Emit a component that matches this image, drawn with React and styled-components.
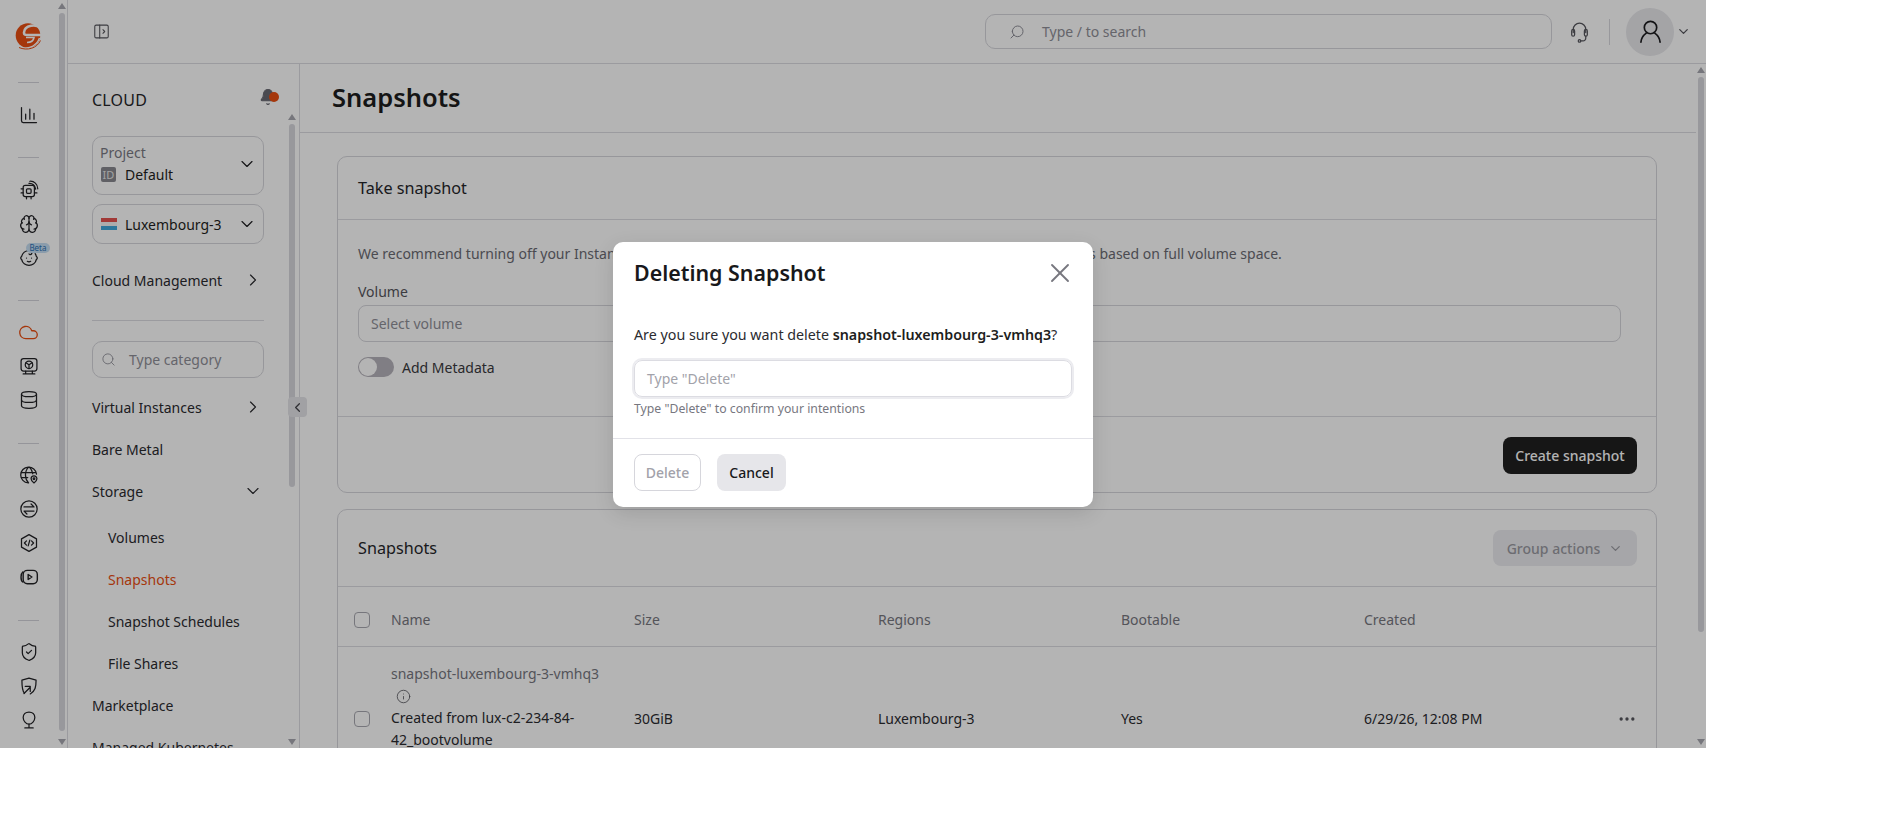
import React from 'react';
import styled, { createGlobalStyle } from 'styled-components';
import { ChevronDown, ChevronRight, ChevronLeft, Search, X, Brain, Baby, Cloud, Database, ShieldCheck, Info, Ellipsis, Bell } from 'lucide-react';

const Global = createGlobalStyle`
  html, body { margin: 0; padding: 0; background: #fff; }
  body { font-family: "Noto Sans", "Open Sans", sans-serif; font-size: 14px; color: #1f1f22; }
  * { box-sizing: border-box; }
`;

const Page = styled.div`
  position: relative; width: 1706px; height: 748px; overflow: hidden; display: flex; background: #fff;
`;
const Rail = styled.aside`
  width: 68px; flex: none; display: flex; border-right: 1px solid #dcdce2;
`;
const RailIcons = styled.nav`
  width: 57px; flex: none; display: flex; flex-direction: column; align-items: center; padding-top: 18px; color: #2a2a2e;
`;
const RailDivider = styled.hr`
  width: 21px; height: 1px; border: 0; background: #d4d4da; margin: ${p => p.$t}px 0 ${p => p.$b}px;
  flex: none;
`;
const RailIcon = styled.span`
  position: relative; height: 34px; width: 34px; flex: none; display: flex; align-items: center; justify-content: center;
  color: ${p => p.$active ? '#ea4e12' : '#222226'};
`;
const BetaBadge = styled.span`
  position: absolute; top: 2px; right: -4px; height: 10px; padding: 0 3px; border-radius: 5px;
  background: #c6def2; color: #2c70b4; font-size: 8px; line-height: 10px;
`;
const Scroll = styled.div`
  display: flex; flex-direction: column; align-items: center; width: ${p => p.$w || 9}px; flex: none;
  height: 100%; padding: ${p => p.$top || 3}px 0 3px;
`;
const ArrowUp = styled.i`
  width: 0; height: 0; flex: none; border: 4px solid transparent; border-top: 0; border-bottom: 6px solid #a8a8b0;
`;
const ArrowDown = styled.i`
  width: 0; height: 0; flex: none; border: 4px solid transparent; border-bottom: 0; border-top: 6px solid #a8a8b0; margin-top: auto;
`;
const Thumb = styled.b`
  display: block; width: 6px; height: ${p => p.$h}px; flex: none; margin-top: 4px; border-radius: 3px; background: #d8d8de;
`;
const Column = styled.div`
  flex: 1; min-width: 0; display: flex; flex-direction: column;
`;
const TopBar = styled.header`
  height: 64px; flex: none; display: flex; align-items: center; padding: 0 15px 0 25px; border-bottom: 1px solid #dcdce2;
`;
const IconButton = styled.span`
  display: flex; align-items: center; color: #55555c;
`;
const SearchBar = styled.div`
  margin-left: auto; width: 567px; height: 35px; margin-right: 15px; display: flex; align-items: center; gap: 17px; padding-left: 23px;
  border: 1px solid #d6d6dc; border-radius: 10px; color: #8f8f98; font-size: 14px;
`;
const VLine = styled.span`
  width: 1px; height: 26px; background: #d8d8de; margin: 0 16px 0 17px;
`;
const Avatar = styled.span`
  width: 48px; height: 48px; border-radius: 50%; background: #e8e8ec; display: flex; align-items: center; justify-content: center; color: #1d1d20;
`;
const Body = styled.div`
  flex: 1; min-height: 0; display: flex;
`;
const SideBar = styled.aside`
  position: relative; width: 232px; flex: none; display: flex; border-right: 1px solid #dcdce2;
`;
const SideInner = styled.div`
  width: 219px; flex: none; padding: 0 0 0 24px; overflow: hidden;
`;
const SideHead = styled.div`
  height: 72px; width: 187px; display: flex; align-items: center; justify-content: space-between; font-size: 16px; letter-spacing: .2px; color: #26262a;
`;
const BellWrap = styled.span`
  position: relative; display: flex; width: 20px; color: #6a6a72; margin-top: -6px;
`;
const BellDot = styled.span`
  position: absolute; right: 0; top: 4px; width: 10px; height: 10px; border-radius: 50%; background: #ea4e12;
`;
const SelectBox = styled.div`
  width: 172px; height: ${p => p.$h}px; margin-bottom: 9px; padding: 0 6px ${p => p.$pb || 0}px ${p => p.$pl || 7}px; display: flex; align-items: center; justify-content: space-between;
  border: 1px solid #d6d6dc; border-radius: 10px;
`;
const SelectStack = styled.div`
  display: flex; flex-direction: column;
`;
const SelectLabel = styled.span`
  color: #7a7a84; font-size: 14px; line-height: 21px;
`;
const SelectValue = styled.span`
  display: flex; align-items: center; gap: 8px; font-size: 14px; line-height: 23px; color: #1f1f22;
`;
const IdChip = styled.span`
  width: 15px; height: 15px; margin: 0 1px 0 1px; background: #88888f; color: #e6e6e6; border-radius: 2px; font-size: 11px; line-height: 15px; text-align: center;
`;
const Flag = styled.span`
  width: 16px; height: 12px; display: block; flex: none; margin-left: 1px;
  background: linear-gradient(#e4524f 0 33%, #f4f4f4 33% 66%, #41a9dc 66%);
`;
const NavRow = styled.div`
  width: 171px; height: 42px; flex: none; display: flex; align-items: center; justify-content: space-between;
  padding-left: ${p => p.$sub ? 16 : 0}px; color: ${p => p.$active ? '#ea4e12' : '#2b2b30'}; font-size: 14px; white-space: nowrap;
`;
const ManagementRow = styled(NavRow)`
  margin-top: 19px; height: 34px;
`;
const SideDivider = styled.hr`
  width: 172px; height: 1px; margin: 23px 0 20px; border: 0; background: #dcdce2;
`;
const SearchSide = styled.div`
  width: 172px; height: 37px; display: flex; align-items: center; gap: 13px; padding-left: 8px; margin-bottom: 8px;
  border: 1px solid #d6d6dc; border-radius: 10px; color: #8f8f98;
`;
const SubList = styled.div`
  padding-top: 4px;
`;
const Collapse = styled.span`
  position: absolute; left: 220px; top: 333px; width: 19px; height: 20px; border-radius: 4px; background: #e4e4e8;
  display: flex; align-items: center; justify-content: center; color: #44444a;
`;
const Content = styled.main`
  flex: 1; min-width: 0; display: flex;
`;
const ContentInner = styled.div`
  width: 1396px; flex: none;
`;
const PageHead = styled.div`
  height: 69px; padding: 0 0 3px 32px; display: flex; align-items: center; border-bottom: 1px solid #dcdce2;
`;
const H1 = styled.h1`
  margin: 0; font-size: 25.5px; font-weight: 600; color: #1d1d20;
`;
const Card = styled.section`
  width: 1320px; margin: ${p => p.$t}px 0 0 37px; border: 1px solid #d6d6dc; border-radius: ${p => p.$open ? '10px 10px 0 0' : '10px'};
`;
const CardHead = styled.div`
  height: ${p => p.$h}px; padding: 0 19px 0 20px; display: flex; align-items: center; justify-content: space-between; border-bottom: 1px solid #dcdce2;
  font-size: 16.2px; color: #26262a;
`;
const CardBody = styled.div`
  height: 197px; padding: 23px 20px 0; border-bottom: 1px solid #dcdce2;
`;
const Note = styled.p`
  margin: 0; line-height: 22px; color: #6b6b73; font-size: 14px;
`;
const FieldLabel = styled.div`
  margin-top: 16px; line-height: 22px; color: #55555c;
`;
const Field = styled.div`
  width: 1263px; height: 37px; margin-top: 2px; padding-left: 12px; display: flex; align-items: center; border: 1px solid #d6d6dc; border-radius: 8px; color: #8f8f98; font-size: 14px;
`;
const SwitchRow = styled.div`
  margin-top: 15px; display: flex; align-items: center; gap: 8px; color: #3a3a40;
`;
const Switch = styled.span`
  position: relative; width: 36px; height: 20px; border-radius: 10px; background: #b6b3bb;
  &::after { content: ''; position: absolute; left: 1px; top: 1px; width: 18px; height: 18px; border-radius: 50%; background: #fff; }
`;
const CardFoot = styled.div`
  height: 75px; padding: 0 19px; display: flex; align-items: center; justify-content: flex-end;
`;
const PrimaryBtn = styled.button`
  height: 37px; width: 134px; border: 0; border-radius: 8px; background: #202020; color: #fff; font: 500 14px "Noto Sans", sans-serif; margin-top: 1px;
`;
const GroupBtn = styled.button`
  height: 36px; width: 144px; border: 0; border-radius: 8px; background: #ececf0; color: #9a9aa2; display: flex; align-items: center; justify-content: center; gap: 8px;
  font: 500 14px "Noto Sans", sans-serif;
`;
const TableRow = styled.div`
  display: grid; grid-template-columns: 37px 243px 244px 243px 243px 1fr 40px; align-items: center;
  padding-left: 16px; height: ${p => p.$h}px; padding-top: ${p => p.$head ? 7 : 0}px; border-bottom: ${p => p.$line ? '1px solid #dcdce2' : '0'};
  color: ${p => p.$head ? '#77777f' : '#2b2b30'}; line-height: 22px;
`;
const Check = styled.span`
  width: 16px; height: 16px; display: block; border: 1px solid #a8a8b0; border-radius: 4px; background: #fff;
`;
const NameCell = styled.div`
  width: 218px; padding-bottom: 24px;
`;
const SnapName = styled.span`
  color: #77777f;
`;
const InfoMark = styled.span`
  display: inline-flex; margin: 0 0 0 5px; vertical-align: -3px; color: #55555c;
`;
const More = styled.span`
  display: flex; color: #55555c; margin-left: 1px;
`;
const Overlay = styled.div`
  position: absolute; inset: 0; background: rgba(0,0,0,.295); display: flex; align-items: center; justify-content: center;
`;
const Modal = styled.div`
  width: 480px; height: 265px; background: #fff; border-radius: 10px; box-shadow: 0 6px 20px rgba(0,0,0,.12); display: flex; flex-direction: column;
`;
const ModalHead = styled.div`
  height: 62px; padding: 0 17px 0 21px; display: flex; align-items: center; justify-content: space-between;
`;
const ModalTitle = styled.h2`
  margin: 0; font-size: 21.4px; font-weight: 600; color: #18181b;
`;
const CloseBtn = styled.span`
  display: flex; color: #77777f;
`;
const ModalBody = styled.div`
  height: 135px; padding: 20px 21px 0; border-bottom: 1px solid #e2e2e8;
`;
const Confirm = styled.p`
  margin: 0; line-height: 22px; color: #2b2b30; font-size: 14.28px;
  strong { font-weight: 600; color: #1d1d20; }
`;
const ConfirmInput = styled.div`
  height: 37px; margin-top: 14px; padding-left: 12px; display: flex; align-items: center; border: 1px solid #dcdce2; border-radius: 8px; box-shadow: 0 0 0 2px #ececf0;
  color: #a2a2aa; font-size: 14px;
`;
const Hint = styled.div`
  margin-top: 3px; font-size: 12.25px; line-height: 18px; color: #77777f;
`;
const ModalFoot = styled.div`
  flex: 1; padding: 15px 21px; display: flex; gap: 16px; align-items: flex-start;
`;
const GhostBtn = styled.button`
  height: 37px; width: 67px; border-radius: 8px; border: 1px solid #d6d6dc; background: #fff; color: #a2a2aa; font: 500 14px "Noto Sans", sans-serif; padding: 0;
`;
const CancelBtn = styled.button`
  height: 37px; width: 69px; border-radius: 8px; border: 0; background: #e6e6ea; color: #18181b; font: 500 14px "Noto Sans", sans-serif; padding: 0;
`;

const Svg = ({ children, s = 20, sw = 1.5 }) => (
  <svg width={s} height={s} viewBox="0 0 24 24" fill="none" stroke="currentColor" strokeWidth={sw} strokeLinecap="round" strokeLinejoin="round">{children}</svg>
);
const Logo = () => (
  <svg width="27" height="29" viewBox="0 0 27 29">
    <circle cx="13" cy="14.500" r="12.300" fill="#ea4e12" />
    <path d="M27 7.500C21 2.500 9.500 4 9 11.500 8.900 13.500 10 14 12 14h15" fill="none" stroke="#fff" strokeWidth="2.600" />
    <path d="M11 16.500h8c-.5 3-3 5-7 5" fill="none" stroke="#fff" strokeWidth="1.600" />
    <path d="M2 25c7 4.500 19 2 22.500-8" fill="none" stroke="#fff" strokeWidth="1.400" />
    <path d="M4 26.500c8 3.500 18 1 21.500-7" fill="none" stroke="#ea4e12" strokeWidth="1" />
  </svg>
);
const Chip = () => (<Svg><rect x="5" y="6.500" width="13.500" height="13.500" rx="2.500"/><rect x="9" y="10.500" width="5.500" height="5.500" rx="1.200"/><path d="M2.500 10.500H5M2.500 15.500H5M9 20v2.500M14.500 20v2.500M18.500 15.500h3M12 4c4-.5 7.500 2.500 8 7M13 1.500c5-.5 9.500 3.500 9.500 9"/></Svg>);
const MonitorCube = () => (<Svg><rect x="2.500" y="3" width="19" height="15" rx="3"/><circle cx="12" cy="10.500" r="4.500"/><path d="M12 10.500V15M12 10.500 8.300 8M12 10.500 15.700 8M5 21.500h14M8 18v3.500M16 18v3.500"/></Svg>);
const GlobePin = () => (<Svg><path d="M21 11a9.500 9.500 0 1 0-10 10.500M2.500 9h18M2.500 15h8M11.500 2.500c-5 5-5 14 0 19M12.500 2.500c2.300 2.300 3.600 5 4 8"/><path d="M18 21.500s-3.500-2.500-3.500-5a3.500 3.500 0 0 1 7 0c0 2.500-3.500 5-3.500 5z"/><circle cx="18" cy="16.500" r="1"/></Svg>);
const SwapCircle = () => (<Svg><circle cx="12" cy="12" r="9.800"/><path d="M6 9.500h12M14.500 6l3.500 3.500M18 14.500H6M9.500 18 6 14.500"/></Svg>);
const HexCode = () => (<Svg><path d="M12 2 21 7v10l-9 5-9-5V7z"/><path d="m9 9.500-2.500 2.500L9 14.500M15 9.500l2.500 2.500-2.500 2.500M13 8.500l-2 7"/></Svg>);
const VideoFrame = () => (<Svg sw={1.700}><rect x="5" y="4" width="17" height="16" rx="5"/><path d="M4.500 6C2 8 1.500 16 4.500 18"/><path d="M11 9v6l4.500-3z"/></Svg>);
const ShieldArrow = () => (<Svg><path d="M6.500 20.500C4 18 3.500 14 3.500 5L12 2.500 20.500 5c0 8-1 13-7 16.500"/><path d="M6 21l7.500-7.500M7.500 12.500h6v6"/></Svg>);
const BulbPin = () => (<Svg><path d="M12 2.500c4 0 7 2.500 7 6.500s-3.500 8-7 8-7-4-7-8 3-6.500 7-6.500z"/><path d="M12 17v4.500M7 21.500h10"/></Svg>);
const PanelIcon = () => (<Svg s={17}><rect x="2.500" y="3" width="19" height="18" rx="2"/><path d="M9.500 3v18M14 9.500l2.500 2.500-2.500 2.500"/></Svg>);
const ChartIcon = () => (<Svg><path d="M3 3v16a2 2 0 0 0 2 2h16M8 17v-6M13 17V5M18 17v-7"/></Svg>);
const HeadsetIcon = () => (<Svg s={25} sw={1.200}><path d="M6 13V10a6 6 0 0 1 12 0v3"/><rect x="4.500" y="10" width="2.800" height="6.500" rx="1.400"/><rect x="16.700" y="10" width="2.800" height="6.500" rx="1.400"/><path d="M18 16.500v2a2.500 2.500 0 0 1-2.500 2.500H13"/><circle cx="12" cy="21" r="1.200"/></Svg>);
const UserIcon = () => (<Svg s={27} sw={1.500}><circle cx="12" cy="8.500" r="5.500"/><path d="M3.500 21.500c.3-3.500 2-6 4.700-8M20.500 21.500c-.3-3.500-2-6-4.700-8"/></Svg>);

export default function App() {
  return (
    <Page>
      <Global />
      <Rail>
        <RailIcons>
          <RailIcon><Logo /></RailIcon>
          <RailDivider $t={30} $b={15} />
          <RailIcon><ChartIcon /></RailIcon>
          <RailDivider $t={25} $b={15} />
          <RailIcon><Chip /></RailIcon>
          <RailIcon><Brain size={20} strokeWidth={1.5} /></RailIcon>
          <RailIcon><Baby size={20} strokeWidth={1.5} /><BetaBadge>Beta</BetaBadge></RailIcon>
          <RailDivider $t={25} $b={14} />
          <RailIcon $active><Cloud size={21} strokeWidth={1.5} /></RailIcon>
          <RailIcon><MonitorCube /></RailIcon>
          <RailIcon><Database size={20} strokeWidth={1.5} /></RailIcon>
          <RailDivider $t={26} $b={14} />
          <RailIcon><GlobePin /></RailIcon>
          <RailIcon><SwapCircle /></RailIcon>
          <RailIcon><HexCode /></RailIcon>
          <RailIcon><VideoFrame /></RailIcon>
          <RailDivider $t={26} $b={14} />
          <RailIcon><ShieldCheck size={20} strokeWidth={1.5} /></RailIcon>
          <RailIcon><ShieldArrow /></RailIcon>
          <RailIcon><BulbPin /></RailIcon>
        </RailIcons>
        <Scroll $w={10}><ArrowUp /><Thumb $h={718} /><ArrowDown /></Scroll>
      </Rail>
      <Column>
        <TopBar>
          <IconButton><PanelIcon /></IconButton>
          <SearchBar><Search size={16} strokeWidth={1.5} style={{ transform: 'scaleX(-1)' }} />Type / to search</SearchBar>
          <IconButton><HeadsetIcon /></IconButton>
          <VLine />
          <Avatar><UserIcon /></Avatar>
          <IconButton><ChevronDown size={15} style={{ marginLeft: 2 }} /></IconButton>
        </TopBar>
        <Body>
          <SideBar>
            <SideInner>
              <SideHead>CLOUD<BellWrap><Bell size={18} fill="currentColor" strokeWidth={1.5} /><BellDot /></BellWrap></SideHead>
              <SelectBox $h={59} $pb={4}>
                <SelectStack>
                  <SelectLabel>Project</SelectLabel>
                  <SelectValue><IdChip>ID</IdChip>Default</SelectValue>
                </SelectStack>
                <ChevronDown size={20} strokeWidth={1.4} />
              </SelectBox>
              <SelectBox $h={40}>
                <SelectValue><Flag />Luxembourg-3</SelectValue>
                <ChevronDown size={20} strokeWidth={1.4} />
              </SelectBox>
              <ManagementRow>Cloud Management<ChevronRight size={20} strokeWidth={1.4} /></ManagementRow>
              <SideDivider />
              <SearchSide><Search size={15} strokeWidth={1.4} />Type category</SearchSide>
              <NavRow>Virtual Instances<ChevronRight size={20} strokeWidth={1.4} /></NavRow>
              <NavRow>Bare Metal</NavRow>
              <NavRow>Storage<ChevronDown size={20} strokeWidth={1.4} /></NavRow>
              <SubList>
                <NavRow $sub>Volumes</NavRow>
                <NavRow $sub $active>Snapshots</NavRow>
                <NavRow $sub>Snapshot Schedules</NavRow>
                <NavRow $sub>File Shares</NavRow>
              </SubList>
              <NavRow>Marketplace</NavRow>
              <NavRow>Managed Kubernetes</NavRow>
            </SideInner>
            <Scroll $w={9} $top={50}><ArrowUp /><Thumb $h={363} /><ArrowDown /></Scroll>
            <Collapse><ChevronLeft size={15} /></Collapse>
          </SideBar>
          <Content>
            <ContentInner>
              <PageHead><H1>Snapshots</H1></PageHead>
              <Card $t={23}>
                <CardHead $h={63}>Take snapshot</CardHead>
                <CardBody>
                  <Note>We recommend turning off your Instance before making a snapshot to ensure data consistency. Snapshot size is based on full volume space.</Note>
                  <FieldLabel>Volume</FieldLabel>
                  <Field>Select volume</Field>
                  <SwitchRow><Switch />Add Metadata</SwitchRow>
                </CardBody>
                <CardFoot><PrimaryBtn>Create snapshot</PrimaryBtn></CardFoot>
              </Card>
              <Card $t={16} $open>
                <CardHead $h={77}>Snapshots<GroupBtn>Group actions<ChevronDown size={15} /></GroupBtn></CardHead>
                <TableRow $h={60} $line $head>
                  <Check />
                  <span>Name</span><span>Size</span><span>Regions</span><span>Bootable</span><span>Created</span><span />
                </TableRow>
                <TableRow $h={144}>
                  <Check />
                  <NameCell>
                    <SnapName>snapshot-luxembourg-3-vmhq3</SnapName>{' '}
                    <InfoMark><Info size={15} strokeWidth={1.3} /></InfoMark>
                    <br />
                    Created from lux-c2-234-84-42_bootvolume
                  </NameCell>
                  <span>30GiB</span><span>Luxembourg-3</span><span>Yes</span><span>6/29/26, 12:08 PM</span>
                  <More><Ellipsis size={20} strokeWidth={2} /></More>
                </TableRow>
              </Card>
            </ContentInner>
            <Scroll $w={10}><ArrowUp /><Thumb $h={555} /><ArrowDown /></Scroll>
          </Content>
        </Body>
      </Column>
      <Overlay>
        <Modal>
          <ModalHead>
            <ModalTitle>Deleting Snapshot</ModalTitle>
            <CloseBtn><X size={32} strokeWidth={1.4} /></CloseBtn>
          </ModalHead>
          <ModalBody>
            <Confirm>Are you sure you want delete <strong>snapshot-luxembourg-3-vmhq3</strong>?</Confirm>
            <ConfirmInput>Type "Delete"</ConfirmInput>
            <Hint>Type "Delete" to confirm your intentions</Hint>
          </ModalBody>
          <ModalFoot>
            <GhostBtn>Delete</GhostBtn>
            <CancelBtn>Cancel</CancelBtn>
          </ModalFoot>
        </Modal>
      </Overlay>
    </Page>
  );
}
